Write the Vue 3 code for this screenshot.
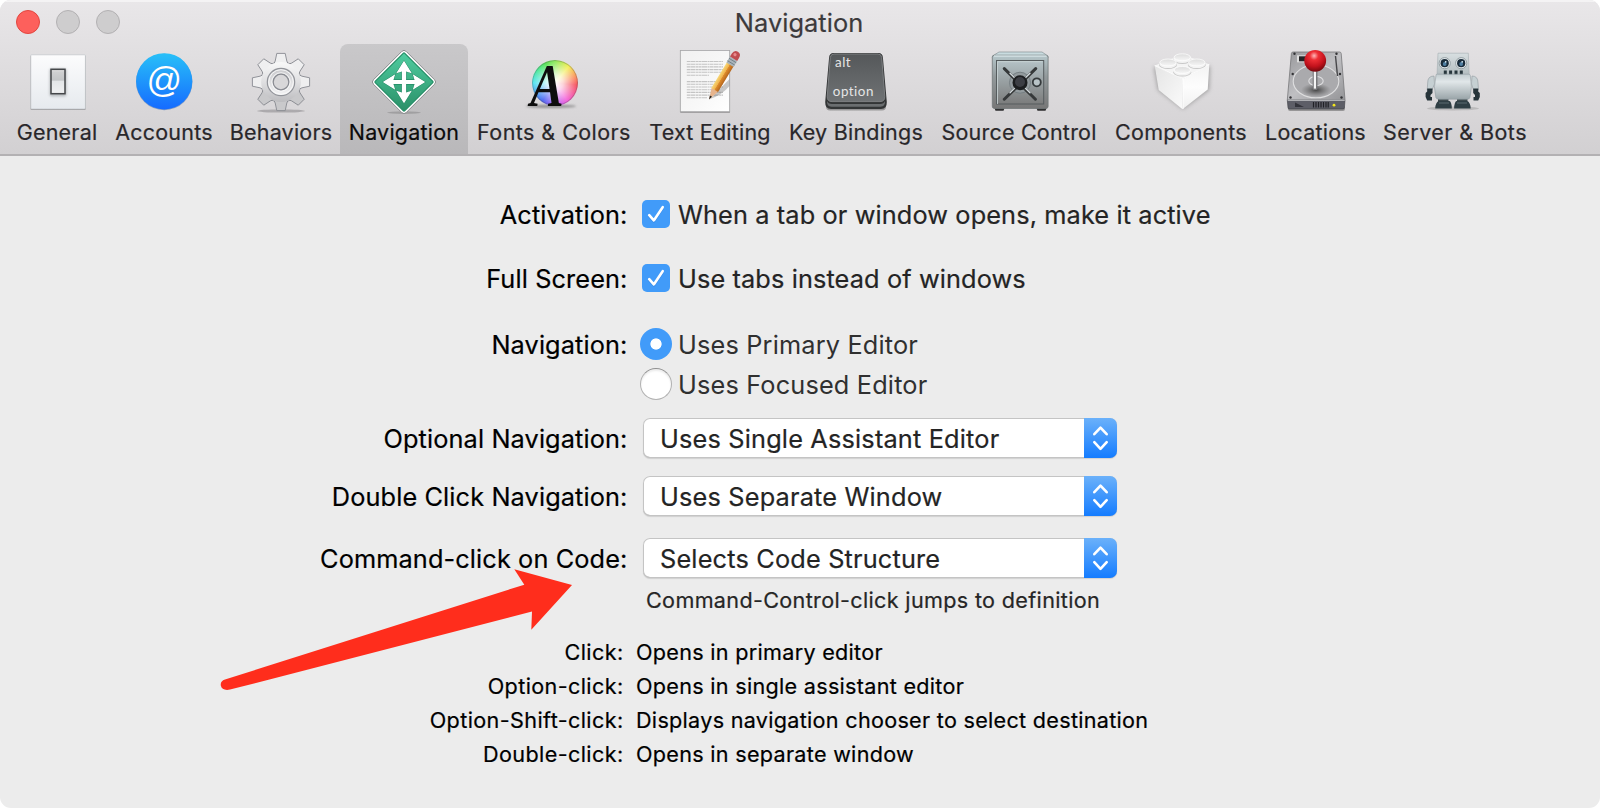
<script setup>
import { ref } from 'vue'

const tabs = [
  { id: 'general', label: 'General' },
  { id: 'accounts', label: 'Accounts' },
  { id: 'behaviors', label: 'Behaviors' },
  { id: 'navigation', label: 'Navigation' },
  { id: 'fonts', label: 'Fonts & Colors' },
  { id: 'text', label: 'Text Editing' },
  { id: 'keys', label: 'Key Bindings' },
  { id: 'source', label: 'Source Control' },
  { id: 'components', label: 'Components' },
  { id: 'locations', label: 'Locations' },
  { id: 'server', label: 'Server & Bots' },
]
const active = ref('navigation')

const checks = [
  { id: 'activation', label: 'Activation:', text: 'When a tab or window opens, make it active' },
  { id: 'fullscreen', label: 'Full Screen:', text: 'Use tabs instead of windows' },
]
const popups = [
  { id: 'optional', label: 'Optional Navigation:', value: 'Uses Single Assistant Editor' },
  { id: 'double', label: 'Double Click Navigation:', value: 'Uses Separate Window' },
  { id: 'command', label: 'Command-click on Code:', value: 'Selects Code Structure' },
]
const hints = [
  { key: 'Click:', value: 'Opens in primary editor' },
  { key: 'Option-click:', value: 'Opens in single assistant editor' },
  { key: 'Option-Shift-click:', value: 'Displays navigation chooser to select destination' },
  { key: 'Double-click:', value: 'Opens in separate window' },
]
const teeth = [0, 45, 90, 135, 180, 225, 270, 315]
const arms = [0, 90, 180, 270]
const lines = [
  [11.5, 45], [14.2, 45], [16.9, 45], [19.6, 45], [22.3, 45], [25.2, 31],
  [31.6, 45], [34.3, 45], [37, 45], [39.7, 42], [42.4, 45], [45.1, 45], [47.8, 29],
]
const screws = [[10.5, 3.8], [52.5, 3.8], [8.7, 24], [56, 24], [6.5, 47.5], [57.5, 47.5]]
</script>

<template>
  <div class="window">
    <header class="header">
      <div class="titlebar">
        <div class="lights">
          <i class="light close"></i><i class="light"></i><i class="light"></i>
        </div>
        <h1 class="title">Navigation</h1>
      </div>
      <nav class="toolbar">
        <button
          v-for="t in tabs"
          :key="t.id"
          type="button"
          :class="['tab', t.id, { selected: active === t.id }]"
        >
          <svg class="icon" viewBox="0 0 64 64">
            <template v-if="t.id === 'general'">
              <defs>
                <linearGradient id="plate" x2="0" y2="1"><stop stop-color="#fcfcfd" /><stop offset="1" stop-color="#e6eaee" /></linearGradient>
                <linearGradient id="rocker" x2="0" y2="1"><stop stop-color="#e2e2e3" /><stop offset=".12" stop-color="#cfd0d1" /><stop offset=".44" stop-color="#c3c5c7" /><stop offset=".5" stop-color="#e4e6e8" /><stop offset="1" stop-color="#f0f1f2" /></linearGradient>
              </defs>
              <rect x="5.5" y="5.5" width="55.2" height="54.6" rx="1" fill="#000" opacity=".25" />
              <rect x="5.8" y="4.8" width="54.6" height="54.2" rx=".8" fill="url(#plate)" stroke="#b9bec3" stroke-width=".6" />
              <rect class="soft-small" x="24.5" y="18.5" width="17" height="28" rx="2" fill="#b9bdc0" />
              <rect x="26" y="19.3" width="14" height="24.4" fill="url(#rocker)" stroke="#45474a" stroke-width="1.5" />
            </template>

            <template v-else-if="t.id === 'accounts'">
              <defs><linearGradient id="acc" x2="0" y2="1"><stop stop-color="#28c0f8" /><stop offset="1" stop-color="#156bff" /></linearGradient></defs>
              <circle cx="32.2" cy="32" r="28.2" fill="#2f63a8" opacity=".5" />
              <circle cx="32.2" cy="31.3" r="28.1" fill="url(#acc)" />
              <text class="at shade" x="32.2" y="42.4" text-anchor="middle">@</text>
              <text class="at" x="32.2" y="41.5" text-anchor="middle">@</text>
            </template>

            <template v-else-if="t.id === 'behaviors'">
              <defs>
                <linearGradient id="gear" gradientUnits="userSpaceOnUse" x1="0" y1="10" x2="0" y2="54"><stop stop-color="#fbfbfb" /><stop offset=".5" stop-color="#dfdfe1" /><stop offset="1" stop-color="#b9b9bc" /></linearGradient>
                <linearGradient id="ringg" x2="0" y2="1"><stop stop-color="#c9c9cc" /><stop offset="1" stop-color="#f4f4f5" /></linearGradient>
              </defs>
              <ellipse cx="32" cy="61" rx="24" ry="1.6" fill="#77757a" opacity=".45" />
              <circle cx="32" cy="32" r="20.3" fill="none" stroke="#94959b" stroke-width=".9" />
              <g v-for="a in teeth" :key="a" :transform="`rotate(${a} 32 32)`">
                <path d="M24.6 14.5 L26.2 11 L27.8 3.4 H36.2 L37.8 11 L39.4 14.5" :fill="a > 90 && a < 270 ? '#c9c9cb' : '#efeff0'" stroke="#888a91" stroke-width=".9" stroke-linejoin="round" />
              </g>
              <circle cx="32" cy="32" r="19.9" fill="url(#gear)" />
              <circle cx="32" cy="32" r="13.7" fill="url(#ringg)" stroke="#92949a" stroke-width="1.2" />
              <circle cx="32" cy="32" r="12.3" fill="none" stroke="#fafafa" stroke-width=".9" />
              <circle cx="32" cy="32" r="9.2" fill="none" stroke="#fafafa" stroke-width=".9" />
              <circle cx="32" cy="32" r="7.8" fill="#d8d7d9" stroke="#888a91" stroke-width="1.2" />
            </template>

            <template v-else-if="t.id === 'navigation'">
              <defs><linearGradient id="sign" x2="1" y2="1"><stop stop-color="#4fcda0" /><stop offset="1" stop-color="#2a8f68" /></linearGradient></defs>
              <ellipse cx="32" cy="62.6" rx="17" ry="1.3" fill="#666" opacity=".35" />
              <rect x="8.8" y="8.8" width="46.4" height="46.4" rx="3.2" transform="rotate(45 32 32)" fill="#fff" stroke="#87878a" stroke-width=".9" />
              <rect x="11.2" y="11.2" width="41.6" height="41.6" rx=".8" transform="rotate(45 32 32)" fill="url(#sign)" stroke="#1c8a61" stroke-width="1.1" />
              <g stroke="#1e8460" stroke-width="1" stroke-linejoin="round">
                <path v-for="a in arms" :key="a" :transform="`rotate(${a} 32 32)`" d="M32 10.8 L39.8 23.2 L34.1 21.4 V30 H29.9 V21.4 L24.2 23.2Z" fill="#fff" />
              </g>
              <path v-for="a in arms" :key="'f' + a" :transform="`rotate(${a} 32 32)`" d="M32 10.8 L39.8 23.2 L34.1 21.4 V34.1 H29.9 V21.4 L24.2 23.2Z" fill="#fff" />
            </template>

            <template v-else-if="t.id === 'fonts'">
              <ellipse class="soft-small" cx="29" cy="56.3" rx="25" ry="1.8" fill="#555" opacity=".5" />
              <foreignObject x="9.7" y="10" width="46" height="46"><div class="wheel"></div></foreignObject>
              <text class="glyph" transform="translate(8.2 56.3) scale(.82 1)">A</text>
            </template>

            <template v-else-if="t.id === 'text'">
              <defs>
                <linearGradient id="paper" x2="1" y2="1"><stop stop-color="#f1f1f1" /><stop offset=".6" stop-color="#f8f8f8" /><stop offset="1" stop-color="#fff" /></linearGradient>
                <linearGradient id="wood" x2="1" y2="0"><stop stop-color="#f7d878" /><stop offset=".45" stop-color="#f0b24b" /><stop offset=".5" stop-color="#df8c2c" /><stop offset="1" stop-color="#b4651c" /></linearGradient>
              </defs>
              <rect x="2.3" y="1" width="49.6" height="62" fill="#000" opacity=".25" />
              <rect x="2.3" y=".5" width="49.4" height="61.2" fill="url(#paper)" stroke="#a5a5a7" stroke-width=".8" />
              <path v-for="(l, i) in lines" :key="i" :d="`M8.8 ${l[0]} H${l[1]}`" stroke="#c4c4c4" stroke-width="1.1" stroke-dasharray="3.2 .4 5 .5 2.1 .4" />
              <path d="M32 49 L51.5 29 V36 Q44 45 32 49Z" fill="#777" opacity=".4" />
              <g transform="translate(31 49.4) rotate(31.2)">
                <path d="M0 0 L-3.8 -11.5 H3.8Z" fill="#e6b48d" />
                <path d="M0 0 L-1.2 -3.8 H1.2Z" fill="#222" />
                <rect x="-3.9" y="-42" width="7.8" height="31" fill="url(#wood)" />
                <rect x="-4.2" y="-47.5" width="8.4" height="7" fill="#aab4ba" />
                <path d="M-4.2 -45.5 H4.2 M-4.2 -42.7 H4.2" stroke="#6e7a82" stroke-width=".8" />
                <path d="M-4.2 -47.5 V-51 Q-4.2 -55.8 0 -55.8 Q4.2 -55.8 4.2 -51 V-47.5Z" fill="#c04c50" />
                <circle cx="-1" cy="-51.8" r="1.6" fill="#e8898c" />
              </g>
            </template>

            <template v-else-if="t.id === 'keys'">
              <defs><linearGradient id="cap" x2="0" y2="1"><stop stop-color="#55585a" /><stop offset="1" stop-color="#6f7274" /></linearGradient></defs>
              <rect x="2" y="52" width="60" height="8.6" rx="4" fill="#000" opacity=".3" />
              <path d="M9.5 3 H54.5 Q58.6 3 58.9 7.5 L62.8 52 Q63 59 57 59 H7 Q1 59 1.2 52 L5.1 7.5 Q5.4 3 9.5 3Z" fill="#333536" />
              <path d="M3 51 Q4 54 8 54 H56 Q60 54 61 51 Q61.5 56.5 56.5 56.8 H7.5 Q2.5 56.5 3 51Z" fill="#6b6e70" />
              <path d="M10 4 H54 Q57.3 4 57.7 7.5 L60.8 46.5 Q61 51.6 56 51.6 H8 Q3 51.6 3.2 46.5 L6.3 7.5 Q6.7 4 10 4Z" fill="url(#cap)" stroke="#828587" stroke-width=".9" />
              <text class="cap" x="11" y="17">alt</text>
              <text class="cap" x="8.8" y="46.4">option</text>
            </template>

            <template v-else-if="t.id === 'source'">
              <defs>
                <linearGradient id="safe" x2="0" y2="1"><stop stop-color="#b6c7cb" /><stop offset=".4" stop-color="#92999b" /><stop offset="1" stop-color="#777" /></linearGradient>
                <linearGradient id="door" x2="0" y2="1"><stop stop-color="#b4c2c6" /><stop offset="1" stop-color="#7b7c7c" /></linearGradient>
              </defs>
              <path d="M7 57 H18 L16.5 60.8 H8.5Z M49 57 H60 L58.5 60.8 H50.5Z" fill="#2e2e2f" />
              <path d="M12 2 H55 L61 6 V8 H5.4 V6Z" fill="#c9dce0" stroke="#879296" stroke-width=".7" />
              <rect x="5.3" y="5.2" width="55.8" height="53.3" rx="2.2" fill="url(#safe)" stroke="#72787a" stroke-width=".8" />
              <path d="M7 6 H59.5" stroke="#e5f1f3" stroke-width="1" />
              <rect x="9.5" y="10.5" width="47.2" height="43.5" fill="url(#door)" stroke="#565c5e" stroke-width="1" />
              <path d="M10.5 54 V11.7 H55.5" fill="none" stroke="#ccd5d7" stroke-width=".8" />
              <circle cx="33" cy="32.7" r="10.5" fill="#939b9e" stroke="#778084" stroke-width="1" />
              <g stroke-linecap="round">
                <path d="M17.3 18.6 L48.4 49.2 M48.7 18.6 L17.3 49.2" stroke="#353839" stroke-width="3" />
                <path d="M23 23.2 L43 42.8 M43 23.2 L23 42.8" stroke="#d5dcdf" stroke-width="1.3" />
              </g>
              <circle cx="33" cy="32.7" r="7.5" fill="#1c1e20" />
              <circle cx="33" cy="32" r="5" fill="#3c3e44" />
              <circle cx="49.8" cy="32.3" r="4" fill="#b8c3c6" stroke="#353a3c" stroke-width="1.8" />
            </template>

            <template v-else-if="t.id === 'components'">
              <defs>
                <linearGradient id="bl" x2="1" y2="1"><stop stop-color="#e5e5e5" /><stop offset="1" stop-color="#fafafa" /></linearGradient>
                <linearGradient id="br" x2="0" y2="1"><stop stop-color="#f3f3f3" /><stop offset=".5" stop-color="#fdfdfd" /><stop offset="1" stop-color="#f0f0f0" /></linearGradient>
                <linearGradient id="st" x2="0" y2="1"><stop stop-color="#dcdcdc" /><stop offset="1" stop-color="#f6f6f6" /></linearGradient>
              </defs>
              <path class="soft" d="M5 17 L61 16 L60 40 L34 59 L9 40Z" fill="#777" opacity=".6" />
              <path d="M5.7 15.5 L33.3 4.5 L60.3 14.3 L34 28.9Z" fill="#f4f4f4" />
              <path d="M5.7 15.5 L34 28.9 L33.5 59.3 L9.7 40Z" fill="url(#bl)" />
              <path d="M60.3 14.3 L34 28.9 L33.5 59.3 L58.7 39.5Z" fill="url(#br)" />
              <path d="M5.7 15.5 L34 28.9 L60.3 14.3 M34 28.9 V59" stroke="#fff" stroke-width=".9" fill="none" />
              <g v-for="(s, i) in [[33.3, 7.3], [19, 12.5], [47.8, 12.5], [33.3, 20]]" :key="i">
                <ellipse :cx="s[0]" :cy="s[1] + 2.4" rx="9" ry="4.2" fill="#c8c8c8" />
                <ellipse :cx="s[0]" :cy="s[1] + 1.6" rx="8.7" ry="4" fill="#f3f3f3" />
                <ellipse :cx="s[0]" :cy="s[1]" rx="8.2" ry="3.5" fill="url(#st)" stroke="#fff" stroke-width=".7" />
              </g>
            </template>

            <template v-else-if="t.id === 'locations'">
              <defs>
                <linearGradient id="disk" x2="1" y2="1"><stop stop-color="#98989b" /><stop offset=".5" stop-color="#bfbfc2" /><stop offset="1" stop-color="#949497" /></linearGradient>
                <radialGradient id="ball" cx=".45" cy=".27" r=".7"><stop stop-color="#ffb9b9" /><stop offset=".28" stop-color="#ee2f35" /><stop offset=".7" stop-color="#c2121c" /><stop offset="1" stop-color="#7c0a10" /></radialGradient>
                <radialGradient id="pit"><stop stop-color="#333" stop-opacity=".85" /><stop offset="1" stop-color="#555" stop-opacity="0" /></radialGradient>
              </defs>
              <rect x="4" y="56" width="57" height="5" rx="2" fill="#000" opacity=".3" />
              <path d="M9 2 H55.5 Q57 2 57.2 3.5 L61 50 H3.3 L7.4 3.5 Q7.6 2 9 2Z" fill="url(#disk)" stroke="#77777a" stroke-width=".8" />
              <path d="M3.3 50 H61 L60.4 57.8 Q60.2 59 59 59 H5.5 Q4.1 59 4 57.8Z" fill="#5d5e67" stroke="#3b3c42" stroke-width=".6" />
              <path d="M3.6 50.2 H60.8" stroke="#dadadd" stroke-width="1" />
              <ellipse cx="32" cy="31.3" rx="22.8" ry="16.5" fill="#aaaaad" stroke="#dededf" stroke-width="1.1" />
              <path d="M51.5 6 L53.5 26" stroke="#47474a" stroke-width="1.4" />
              <ellipse cx="32" cy="40" rx="15" ry="6.8" fill="url(#pit)" />
              <ellipse cx="32" cy="31" rx="7.2" ry="4.5" fill="none" stroke="#dedee0" stroke-width="1.1" />
              <rect x="13" y="5.3" width="10" height="7" fill="#ddd" />
              <rect x="15" y="6.3" width="8" height="5" fill="#252527" />
              <circle v-for="(s, i) in screws" :key="i" :cx="s[0]" :cy="s[1]" r="1.2" fill="#333336" />
              <rect x="28.7" y="20" width="4.8" height="20" rx="1.6" fill="#77777a" />
              <rect x="29.8" y="20" width="2.2" height="18.6" fill="#f5f5f5" />
              <circle cx="31.2" cy="10.8" r="10.9" fill="url(#ball)" />
              <path d="M11 52.5 L20 57 H11Z" fill="#33343b" />
              <path d="M29.5 52 V57.5 M32 52 V57.5 M34.5 52 V57.5 M37 52 V57.5 M39.5 52 V57.5 M42 52 V57.5 M44.2 52 V57.5" stroke="#202126" stroke-width="1.2" />
              <circle cx="50" cy="55.2" r="1.4" fill="#f2e61c" />
            </template>

            <template v-else>
              <defs>
                <linearGradient id="head" x2="0" y2="1"><stop stop-color="#d8dfe1" /><stop offset="1" stop-color="#b4bec1" /></linearGradient>
                <linearGradient id="torso" x2="0" y2="1"><stop stop-color="#c2ccd0" /><stop offset=".3" stop-color="#e1e7e9" /><stop offset="1" stop-color="#9aa5a9" /></linearGradient>
              </defs>
              <ellipse cx="30" cy="58.5" rx="26" ry="2" fill="#777" opacity=".3" />
              <path d="M15 3.2 H45.3 L46.2 24.5 H14Z" fill="url(#head)" stroke="#a5aeb2" stroke-width=".6" />
              <g v-for="x in [21.7, 38.2]" :key="x">
                <circle :cx="x" cy="13.2" r="5.6" fill="#e5eaec" stroke="#8b979c" stroke-width=".9" />
                <circle :cx="x" cy="13.2" r="4.1" fill="#1a2c3a" />
                <circle :cx="x" cy="14" r="1.9" fill="#4f7fa2" />
                <circle :cx="x + 1" cy="11.8" r=".9" fill="#d8edf8" />
              </g>
              <path d="M22.3 20.6 V25 M27.6 20.6 V25 M33 20.6 V25 M38.3 20.6 V25" stroke="#27363d" stroke-width="3" />
              <path d="M11 26 Q4.5 26 4.7 33 L4.2 40 H9 L11.5 34Z M49 26 Q55 26 55 33 L55.5 40 H50.5 L48.5 34Z" fill="#c6d0d3" stroke="#8e999d" stroke-width=".6" />
              <path d="M4.2 38.5 H9.5 V43 L7.5 45 V47 H9 V50.5 H4.2 L2.6 47 V43 L4.2 41.5Z M50.2 38.5 H55.2 V41.5 L56.8 43 V47 L55.2 50.5 H50.5 V47 H52 V45 L50.2 43Z" fill="#27343a" />
              <path d="M15 48 H25.5 V52 H15Z M34 48 H44.5 V52 H34Z" fill="#3c484c" />
              <path d="M13 25.5 Q12.5 24.3 14.5 24.2 H45.5 Q47.5 24.3 47.3 25.5 Q49.6 37 47 47.5 Q46.5 49.2 44.5 49.2 H15.5 Q13.3 49.2 12.8 47.5 Q10 37 13 25.5Z" fill="url(#torso)" stroke="#939fa4" stroke-width=".6" />
              <path d="M16 51 H26.5 Q28.7 52 28.8 58.5 H12.2 Q12.5 52 16 51Z M33.5 51 H44 Q47.4 52 47.7 58.5 H31.1 Q31.3 52 33.5 51Z" fill="#2f3e44" />
              <path d="M16 53 H26 M34 53 H44" stroke="#5c6a70" stroke-width="1" />
            </template>
          </svg>
          <span class="tab-label">{{ t.label }}</span>
        </button>
      </nav>
    </header>

    <main class="form">
      <div v-for="c in checks" :key="c.id" :class="['row', c.id]">
        <span class="label">{{ c.label }}</span>
        <span class="field">
          <svg class="check" viewBox="0 0 28 28">
            <rect width="28" height="28" rx="5" fill="#419bf9" />
            <path d="M7.2 16.2 L11.8 21.2 L20.7 8" fill="none" stroke="#1f6fd0" stroke-opacity=".45" stroke-width="2.6" stroke-linecap="round" stroke-linejoin="round" />
            <path d="M7.2 15.2 L11.8 20.4 L20.7 7.2" fill="none" stroke="#fff" stroke-width="2.6" stroke-linecap="round" stroke-linejoin="round" />
          </svg>
          <span class="text">{{ c.text }}</span>
        </span>
      </div>

      <div class="row primary">
        <span class="label">Navigation:</span>
        <span class="field"><i class="radio on"></i><span class="text light-text">Uses Primary Editor</span></span>
      </div>
      <div class="row focused">
        <span class="label"></span>
        <span class="field"><i class="radio"></i><span class="text light-text">Uses Focused Editor</span></span>
      </div>

      <div v-for="p in popups" :key="p.id" :class="['row', p.id]">
        <span class="label">{{ p.label }}</span>
        <span class="popup">
          <span class="value">{{ p.value }}</span>
          <svg class="stepper" viewBox="0 0 33 40">
            <path d="M10.3 16.2 L16.5 9.6 L22.7 16.2 M10.3 24.2 L16.5 30.8 L22.7 24.2" fill="none" stroke="#fff" stroke-width="2.6" stroke-linecap="round" stroke-linejoin="round" />
          </svg>
        </span>
      </div>

      <p class="caption">Command-Control-click jumps to definition</p>

      <dl class="hints">
        <div v-for="h in hints" :key="h.key" class="hint">
          <dt>{{ h.key }}</dt>
          <dd>{{ h.value }}</dd>
        </div>
      </dl>
    </main>

    <svg class="pointer" viewBox="0 0 352 122">
      <path d="M5 110.5 L304.3 15.7 L294.3 .2 L352 16 L311.3 60.7 L312 42.5 L10 120.6 Q2 122 .8 116.5 Q.2 112 5 110.5Z" fill="#ff2d1c" />
    </svg>
  </div>
</template>

<style>
body {
  background: #fff;
}
</style>

<style scoped>
.window {
  position: relative;
  width: 1600px;
  height: 808px;
  overflow: hidden;
  border-radius: 11px;
  background: #ececec;
  font-family: Inter, "Liberation Sans", sans-serif;
  color: #000;
}
.header {
  box-sizing: border-box;
  height: 156px;
  border-bottom: 2px solid #b3b1b3;
  background: linear-gradient(#e9e7e9, #d2d0d2);
  box-shadow: inset 0 2px 0 #f4f3f4;
}
.titlebar {
  display: grid;
  grid-template-columns: 160px 1fr 162px;
  align-items: center;
  height: 44px;
}
.lights {
  display: flex;
  gap: 16px;
  padding-left: 16px;
}
.light {
  box-sizing: border-box;
  width: 24px;
  height: 24px;
  border: 1px solid #b2b0b2;
  border-radius: 50%;
  background: #cecdce;
}
.light.close {
  border-color: #e2463f;
  background: #fd605c;
}
.title {
  margin: 2px 0 0;
  text-align: center;
  font-size: 25.4px;
  font-weight: 400;
  line-height: 42px;
  letter-spacing: 0.05px;
  color: #3c3a3c;
  -webkit-text-stroke: 0.2px;
}
.toolbar {
  display: flex;
  height: 110px;
  padding-left: 8px;
}
.tab {
  display: flex;
  flex-direction: column;
  align-items: center;
  box-sizing: border-box;
  padding: 6px 0 0;
  border: 0;
  border-radius: 8px 8px 0 0;
  background: none;
  font-family: inherit;
  color: #29272a;
}
.tab.selected {
  background: linear-gradient(#c9c8ca, #b9b8ba);
  color: #0b0b0b;
}
.general { width: 98px; }
.accounts { width: 116px; }
.behaviors { width: 118px; }
.navigation { width: 128px; }
.fonts { width: 172px; }
.text.tab { width: 140px; }
.keys { width: 152px; }
.source { width: 174px; }
.components { width: 150px; }
.locations { width: 119px; }
.server { width: 160px; }
.icon {
  flex: none;
  display: block;
  width: 64px;
  height: 64px;
  overflow: visible;
}
.tab-label {
  margin-top: 4px;
  font-size: 21.5px;
  line-height: 28px;
  letter-spacing: 0.22px;
  white-space: nowrap;
  -webkit-text-stroke: 0.2px;
}
.fonts .tab-label,
.server .tab-label {
  letter-spacing: 0.44px;
}
.at {
  font-family: "Liberation Sans", sans-serif;
  font-size: 35px;
  fill: #fff;
}
.at.shade {
  fill: #0d4db0;
  opacity: 0.5;
}
.glyph {
  font-family: "Liberation Serif", serif;
  font-size: 61px;
  font-weight: 700;
  font-style: italic;
  fill: #0e0e0e;
}
.cap {
  font-family: Lato, sans-serif;
  font-size: 13.4px;
  letter-spacing: 0.5px;
  fill: #e6e6e6;
}
.wheel {
  width: 46px;
  height: 46px;
  border-radius: 50%;
  background:
    radial-gradient(circle, #fff 0, rgba(255, 255, 255, 0.75) 25%, rgba(255, 255, 255, 0) 68%),
    conic-gradient(#8ce85a, #f3ee55 40deg, #fb8a5c 75deg, #f5525f 95deg, #f45fd8 145deg, #b060f5 180deg, #4a63f0 215deg, #52e4f0 270deg, #4be88f 310deg, #57e052 335deg, #8ce85a);
  box-shadow: inset 0 0 0 1px rgba(90, 90, 90, 0.35);
}
.soft {
  filter: blur(2px);
}
.soft-small {
  filter: blur(1px);
}
.form {
  padding-top: 38px;
}
.row {
  display: grid;
  grid-template-columns: 627.5px 1fr;
  align-items: center;
  height: 40px;
  font-size: 25.3px;
  line-height: 38px;
  letter-spacing: 0.12px;
  white-space: nowrap;
}
.activation { margin-bottom: 24px; }
.fullscreen { margin-bottom: 26px; }
.focused { margin-bottom: 14px; }
.optional { margin-bottom: 18px; }
.double { margin-bottom: 22px; }
.label {
  padding-top: 2px;
  text-align: right;
  letter-spacing: 0.12px;
  -webkit-text-stroke: 0.2px;
}
.field {
  display: flex;
  align-items: center;
  padding-left: 12.5px;
}
.check {
  width: 28px;
  height: 28px;
  margin: 0 8px 0 2px;
}
.field .text {
  padding-top: 2px;
  color: #242424;
  -webkit-text-stroke: 0.2px;
}
.field .light-text {
  color: #303030;
  letter-spacing: 0.17px;
  -webkit-text-stroke: 0;
}
.radio {
  box-sizing: border-box;
  width: 32px;
  height: 32px;
  margin-right: 6px;
  border: 1px solid #b2b2b2;
  border-top-color: #909090;
  border-radius: 50%;
  background: #fff;
  box-shadow: inset 0 2px 2px #ececec;
}
.radio.on {
  border: 0;
  background: radial-gradient(circle, #fff 5.2px, #419bf9 6px);
  box-shadow: none;
}
.popup {
  display: flex;
  box-sizing: border-box;
  width: 474px;
  height: 40px;
  margin-left: 15.5px;
  overflow: hidden;
  border-radius: 7px;
  background: #fff;
  box-shadow: inset 0 0 0 1px #c4c4c4, inset 0 -1px 0 0 #adadad, 0 1px 1px rgba(0, 0, 0, 0.12);
}
.value {
  flex: 1;
  padding: 2px 0 0 17px;
  color: #242424;
  letter-spacing: 0.18px;
  -webkit-text-stroke: 0.2px;
}
.stepper {
  width: 33px;
  height: 40px;
  background: linear-gradient(#6bb1fa, #147cff);
}
.caption {
  margin: 5px 0 0 646px;
  font-size: 21.6px;
  line-height: 34px;
  letter-spacing: 0.33px;
  color: #262626;
  -webkit-text-stroke: 0.2px;
}
.hints {
  margin: 18px 0 0;
  font-size: 21.6px;
  line-height: 34px;
  letter-spacing: 0.29px;
  -webkit-text-stroke: 0.2px;
}
.hint {
  display: grid;
  grid-template-columns: 623.5px 1fr;
  column-gap: 12.5px;
}
.hint dt {
  text-align: right;
  letter-spacing: 0.38px;
}
.hint dd {
  margin: 0;
}
.pointer {
  position: absolute;
  left: 220px;
  top: 569px;
  width: 352px;
  height: 122px;
}
</style>
